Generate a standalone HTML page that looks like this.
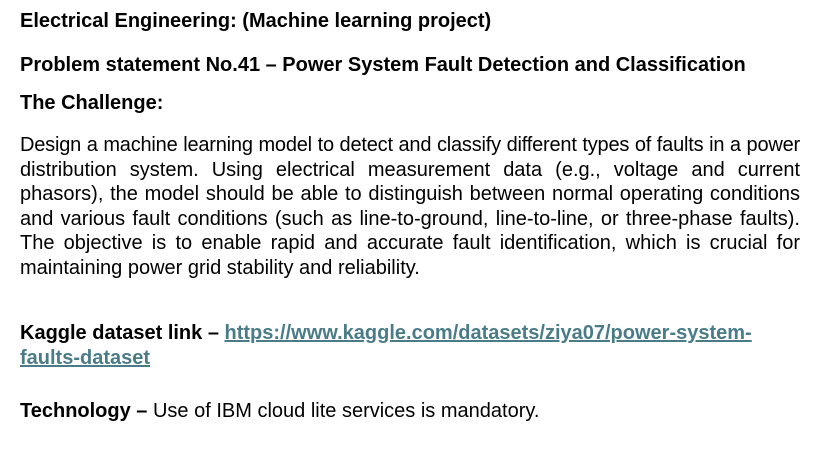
<!DOCTYPE html>
<html><head><meta charset="utf-8"><style>
body{margin:0;width:838px;height:456px;background:#fff;font-family:"Liberation Sans",Arial,sans-serif;color:#000;font-size:20px;position:relative;overflow:hidden}
.a{position:absolute;left:20px;width:780px;line-height:24px;white-space:nowrap}
b{font-weight:bold}
.p{line-height:24.5px}
.p div{text-align:justify;text-align-last:justify}
.p div.l{text-align-last:left}
.p div.t{letter-spacing:-0.2px}
a{color:#4a7c88;font-weight:bold;text-decoration:underline}
</style></head><body>
<div class="a" style="top:9px"><b>Electrical Engineering: (Machine learning project)</b></div>
<div class="a" style="top:53px"><b>Problem statement No.41 – Power System Fault Detection and Classification</b></div>
<div class="a" style="top:91px"><b>The Challenge:</b></div>
<div class="a p" style="top:133px">
<div class="t">Design a machine learning model to detect and classify different types of faults in a power</div>
<div>distribution system. Using electrical measurement data (e.g., voltage and current</div>
<div>phasors), the model should be able to distinguish between normal operating conditions</div>
<div>and various fault conditions (such as line-to-ground, line-to-line, or three-phase faults).</div>
<div>The objective is to enable rapid and accurate fault identification, which is crucial for</div>
<div class="l">maintaining power grid stability and reliability.</div>
</div>
<div class="a" style="top:321px;line-height:25px"><b>Kaggle dataset link – </b><a>https://www.kaggle.com/datasets/ziya07/power-system-<br>faults-dataset</a></div>
<div class="a" style="top:399px"><b>Technology – </b>Use of IBM cloud lite services is mandatory.</div>
</body></html>
